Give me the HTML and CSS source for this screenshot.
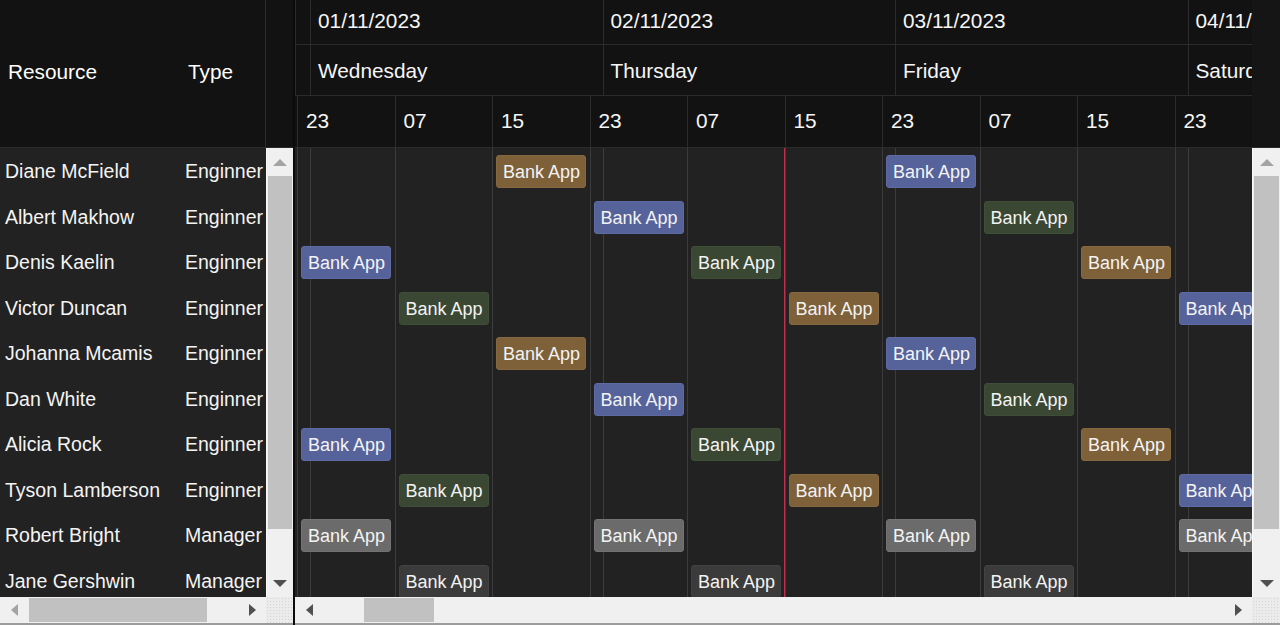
FILE: index.html
```html
<!DOCTYPE html>
<html>
<head>
<meta charset="utf-8">
<link rel="stylesheet" href="styles.css">
</head>
<body>
<div class="scheduler">
  <div class="left">
    <div class="head">
      <div class="l-head-cells"><div class="c-res">Resource</div><div class="c-type">Type</div></div>
      <div class="head-gap"></div>
    </div>
    <div class="body-area">
      <div class="l-rows">
        <div class="l-row"><span class="c-res">Diane McField</span><span class="c-type">Enginner</span></div>
        <div class="l-row"><span class="c-res">Albert Makhow</span><span class="c-type">Enginner</span></div>
        <div class="l-row"><span class="c-res">Denis Kaelin</span><span class="c-type">Enginner</span></div>
        <div class="l-row"><span class="c-res">Victor Duncan</span><span class="c-type">Enginner</span></div>
        <div class="l-row"><span class="c-res">Johanna Mcamis</span><span class="c-type">Enginner</span></div>
        <div class="l-row"><span class="c-res">Dan White</span><span class="c-type">Enginner</span></div>
        <div class="l-row"><span class="c-res">Alicia Rock</span><span class="c-type">Enginner</span></div>
        <div class="l-row"><span class="c-res">Tyson Lamberson</span><span class="c-type">Enginner</span></div>
        <div class="l-row"><span class="c-res">Robert Bright</span><span class="c-type">Manager</span></div>
        <div class="l-row"><span class="c-res">Jane Gershwin</span><span class="c-type">Manager</span></div>
      </div>
      <div class="vscroll vs-left">
        <div class="vs-btn"><span class="arr-up"></span></div>
        <div class="vs-thumb"></div>
        <div class="vs-track"></div>
        <div class="vs-btn"><span class="arr-down"></span></div>
      </div>
    </div>
    <div class="hbar">
      <div class="hs-main">
        <div class="hs-btn"><span class="arr-left dis"></span></div>
        <div class="hs-thumb thumb-left"></div>
        <div class="hs-track"></div>
        <div class="hs-btn hs-btn-r"><span class="arr-right"></span></div>
      </div>
      <div class="corner"></div>
    </div>
  </div>

  <div class="splitter"></div>

  <div class="right">
    <div class="head">
      <div class="tl-head">
        <div class="tl-row tl-row1">
          <div class="cell d-lead"></div>
          <div class="cell day">01/11/2023</div>
          <div class="cell day">02/11/2023</div>
          <div class="cell day">03/11/2023</div>
          <div class="cell day">04/11/2023</div>
        </div>
        <div class="tl-row tl-row2">
          <div class="cell d-lead"></div>
          <div class="cell day">Wednesday</div>
          <div class="cell day">Thursday</div>
          <div class="cell day">Friday</div>
          <div class="cell day">Saturday</div>
        </div>
        <div class="tl-row tl-row3">
          <div class="cell h-lead"></div>
          <div class="cell hour">23</div>
          <div class="cell hour">07</div>
          <div class="cell hour">15</div>
          <div class="cell hour">23</div>
          <div class="cell hour">07</div>
          <div class="cell hour">15</div>
          <div class="cell hour">23</div>
          <div class="cell hour">07</div>
          <div class="cell hour">15</div>
          <div class="cell hour">23</div>
        </div>
      </div>
      <div class="head-gap r-gap"></div>
    </div>
    <div class="body-area">
      <div class="tl-body">
        <div class="grid-hours">
          <div class="g g-lead"></div>
          <div class="g"></div><div class="g"></div><div class="g"></div><div class="g"></div><div class="g"></div>
          <div class="g"></div><div class="g"></div><div class="g"></div><div class="g"></div><div class="g"></div>
        </div>
        <div class="grid-days">
          <div class="gd gd-lead"></div>
          <div class="gd"></div><div class="gd"></div><div class="gd"></div><div class="gd"></div>
        </div>
        <div class="now-line"></div>

        <div class="ev-row"><div class="ev brown s2">Bank App</div><div class="ev blue s6">Bank App</div></div>
        <div class="ev-row"><div class="ev blue s3">Bank App</div><div class="ev green s7">Bank App</div></div>
        <div class="ev-row"><div class="ev blue s0">Bank App</div><div class="ev green s4">Bank App</div><div class="ev brown s8">Bank App</div></div>
        <div class="ev-row"><div class="ev green s1">Bank App</div><div class="ev brown s5">Bank App</div><div class="ev blue s9">Bank App</div></div>
        <div class="ev-row"><div class="ev brown s2">Bank App</div><div class="ev blue s6">Bank App</div></div>
        <div class="ev-row"><div class="ev blue s3">Bank App</div><div class="ev green s7">Bank App</div></div>
        <div class="ev-row"><div class="ev blue s0">Bank App</div><div class="ev green s4">Bank App</div><div class="ev brown s8">Bank App</div></div>
        <div class="ev-row"><div class="ev green s1">Bank App</div><div class="ev brown s5">Bank App</div><div class="ev blue s9">Bank App</div></div>
        <div class="ev-row"><div class="ev gray s0">Bank App</div><div class="ev gray s3">Bank App</div><div class="ev gray s6">Bank App</div><div class="ev gray s9">Bank App</div></div>
        <div class="ev-row"><div class="ev dark s1">Bank App</div><div class="ev dark s4">Bank App</div><div class="ev dark s7">Bank App</div></div>
      </div>
      <div class="vscroll vs-right">
        <div class="vs-btn"><span class="arr-up"></span></div>
        <div class="vs-thumb"></div>
        <div class="vs-track"></div>
        <div class="vs-btn"><span class="arr-down"></span></div>
      </div>
    </div>
    <div class="hbar">
      <div class="hs-main hs-main-r">
        <div class="hs-btn"><span class="arr-left"></span></div>
        <div class="hs-thumb thumb-right"></div>
        <div class="hs-track"></div>
        <div class="hs-btn"><span class="arr-right"></span></div>
      </div>
      <div class="corner corner-r"></div>
    </div>
  </div>
</div>
</body>
</html>
```

FILE: styles.css
```css
* { box-sizing: border-box; }
html, body { margin: 0; padding: 0; }
body {
  width: 1280px;
  height: 625px;
  overflow: hidden;
  background: #222222;
  font-family: "Liberation Sans", Arial, sans-serif;
  color: #ffffff;
}

.scheduler { display: flex; height: 625px; }
.left { width: 293px; flex-shrink: 0; display: flex; flex-direction: column; }
.splitter { width: 2px; flex-shrink: 0; background: #0b0b0b; }
.right { flex: 1; min-width: 0; display: flex; flex-direction: column; }

/* headers */
.head {
  height: 148px;
  flex-shrink: 0;
  display: flex;
  background: #121212;
  border-bottom: 1px solid #2b2b2b;
}
.head-gap { flex: 1; }
.r-gap { background: #151515; }

.l-head-cells {
  width: 266px;
  display: flex;
  align-items: center;
  padding-bottom: 4px;
  border-right: 1px solid #2b2b2b;
  font-size: 20.8px;
}
.l-head-cells .c-res { width: 180px; padding-left: 8px; }
.l-head-cells .c-type { padding-left: 8px; }

.tl-head { width: 957px; overflow: hidden; display: flex; flex-direction: column; }
.tl-row { display: flex; flex-shrink: 0; }
.tl-row1 { height: 45px; border-bottom: 1px solid #2b2b2b; }
.tl-row2 { height: 51px; border-bottom: 1px solid #2b2b2b; }
.tl-row3 { height: 51px; }
.tl-row1 .cell { padding-bottom: 2px; }
.tl-row2 .cell { padding-top: 2px; }
.tl-row3 .cell { padding-bottom: 2px; }

.cell {
  flex-shrink: 0;
  display: flex;
  align-items: center;
  border-left: 1px solid #2b2b2b;
  font-size: 20.8px;
  color: #f6f6f6;
  white-space: nowrap;
  overflow: hidden;
}
.day { width: 292.5px; padding-left: 7px; }
.d-lead { width: 15px; }
.hour { width: 97.5px; padding-left: 8px; }
.h-lead { width: 2px; border-left: none; }

/* body */
.body-area { flex: 1; min-height: 0; display: flex; }

.l-rows { width: 266px; overflow: hidden; flex-shrink: 0; }
.l-row {
  height: 45.5px;
  display: flex;
  align-items: center;
  padding-top: 2px;
  font-size: 19.5px;
  color: #f4f4f4;
  white-space: nowrap;
}
.l-row .c-res { width: 180px; padding-left: 5px; flex-shrink: 0; }
.l-row .c-type { padding-left: 5px; }

.tl-body { width: 957px; flex-shrink: 0; position: relative; overflow: hidden; }
.grid-hours, .grid-days { position: absolute; top: 0; left: 0; bottom: 0; display: flex; }
.g { flex-shrink: 0; width: 97.5px; border-left: 1px solid #3c3c3c; }
.g-lead { width: 2px; border-left: none; }
.gd { flex-shrink: 0; width: 292.5px; border-left: 1px solid #3c3c3c; }
.gd-lead { width: 15px; border-left: none; }
.now-line {
  position: absolute;
  top: 0;
  bottom: 0;
  left: 489px;
  width: 1px;
  background: #c0304e;
}

.ev-row {
  position: relative;
  height: 45.5px;
  display: grid;
  grid-template-columns: 2px repeat(10, 97.5px);
  align-items: start;
}
.ev {
  grid-row: 1;
  margin: 7px 0 0 4px;
  width: 90px;
  height: 33px;
  border-radius: 3px;
  border: 1px solid transparent;
  padding: 1px 0 0 6px;
  font-size: 18px;
  line-height: 30px;
  color: #f3f3f3;
  white-space: nowrap;
  overflow: hidden;
}
.brown { background: #7e6139; border-color: #866840; }
.blue { background: #56639b; border-color: #5d6aa3; }
.green { background: #3a4833; border-color: #3f4e38; }
.gray { background: #6b6b6b; border-color: #737373; }
.dark { background: #3b3b3b; border-color: #424242; }

.s0 { grid-column: 2; }
.s1 { grid-column: 3; }
.s2 { grid-column: 4; }
.s3 { grid-column: 5; }
.s4 { grid-column: 6; }
.s5 { grid-column: 7; }
.s6 { grid-column: 8; }
.s7 { grid-column: 9; }
.s8 { grid-column: 10; }
.s9 { grid-column: 11; }

/* scrollbars */
.vscroll {
  flex-shrink: 0;
  display: flex;
  flex-direction: column;
  background: #f0f0f0;
  border-left: 1px solid #fafafa;
}
.vs-left { width: 27px; }
.vs-right { width: 28px; }
.vs-btn { height: 28px; flex-shrink: 0; display: flex; align-items: center; justify-content: center; }
.vs-thumb { height: 353px; flex-shrink: 0; margin: 0 1px; background: #c1c1c1; }
.vs-track { flex: 1; }

.arr-up {
  width: 0; height: 0;
  border-left: 7px solid transparent;
  border-right: 7px solid transparent;
  border-bottom: 7px solid #a3a3a3;
}
.arr-down {
  width: 0; height: 0;
  border-left: 7px solid transparent;
  border-right: 7px solid transparent;
  border-top: 7px solid #505050;
}
.arr-left {
  width: 0; height: 0;
  border-top: 6px solid transparent;
  border-bottom: 6px solid transparent;
  border-right: 7px solid #505050;
}
.arr-left.dis { border-right-color: #a3a3a3; }
.arr-right {
  width: 0; height: 0;
  border-top: 6px solid transparent;
  border-bottom: 6px solid transparent;
  border-left: 7px solid #505050;
}

.hbar {
  height: 28px;
  flex-shrink: 0;
  display: flex;
  background: #f0f0f0;
  border-bottom: 2px solid #9c9c9c;
}
.hs-main { width: 266px; flex-shrink: 0; display: flex; }
.hs-main-r { width: 957px; }
.hs-btn { width: 28px; flex-shrink: 0; display: flex; align-items: center; justify-content: center; }
.hs-btn-r { width: 27px; }
.hs-thumb { margin: 1px 0; background: #c1c1c1; flex-shrink: 0; }
.thumb-left { margin-left: 1px; width: 178px; }
.thumb-right { margin-left: 41px; width: 70px; }
.hs-track { flex: 1; }
.corner {
  flex: 1;
  background-color: #ebebeb;
  background-image: radial-gradient(#d6d6d6 0.7px, transparent 0.9px);
  background-size: 3px 3px;
}
```
